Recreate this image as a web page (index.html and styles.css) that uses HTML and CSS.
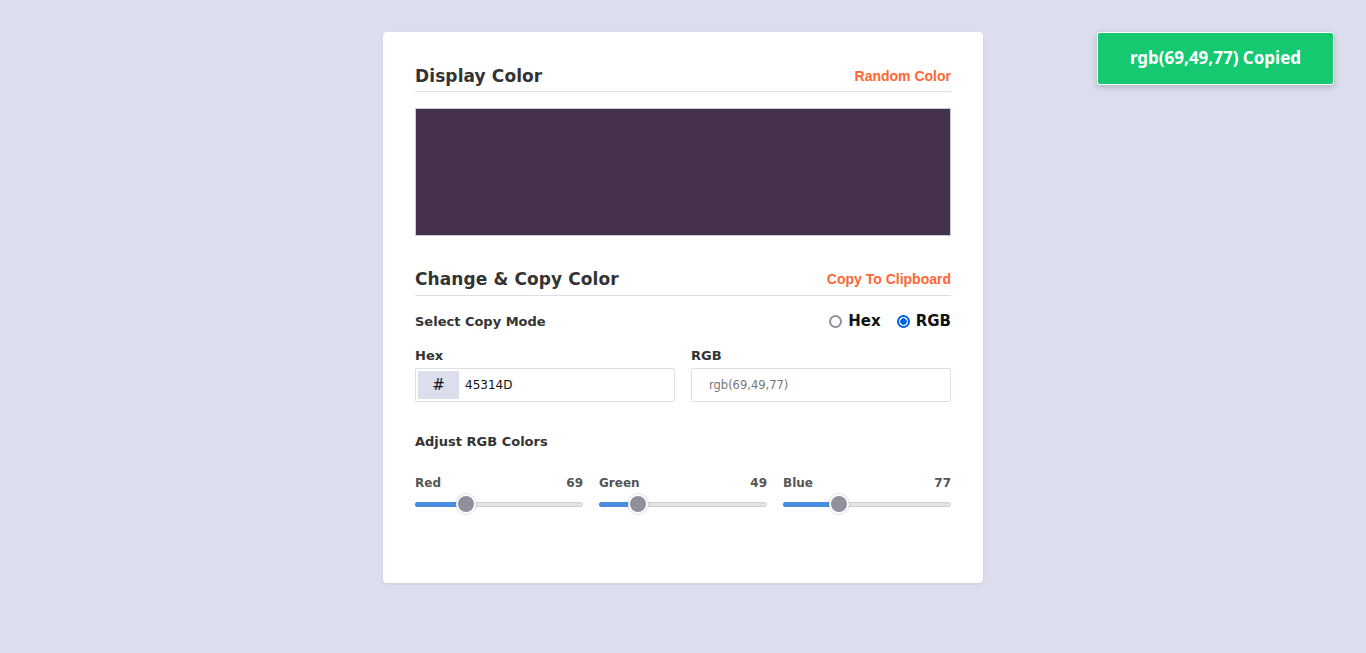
FILE: index.html
```html
<!DOCTYPE html>
<html>
<head>
<meta charset="utf-8">
<link rel="stylesheet" href="styles.css">
</head>
<body>
<div class="page">
  <div class="card">
    <div class="section-head">
      <h2>Display Color</h2>
      <button class="link">Random Color</button>
    </div>
    <div class="display" style="background:#45314D"></div>

    <div class="section-head second">
      <h2>Change &amp; Copy Color</h2>
      <button class="link">Copy To Clipboard</button>
    </div>

    <div class="mode-row">
      <span class="sub">Select Copy Mode</span>
      <div class="radios">
        <label class="radio"><span class="dot"></span>Hex</label>
        <label class="radio"><span class="dot on"></span>RGB</label>
      </div>
    </div>

    <div class="inputs">
      <div class="field">
        <span class="sub">Hex</span>
        <div class="box">
          <span class="hash">#</span>
          <span class="val">45314D</span>
        </div>
      </div>
      <div class="field">
        <span class="sub">RGB</span>
        <div class="box">
          <span class="placeholder">rgb(69,49,77)</span>
        </div>
      </div>
    </div>

    <div class="sub adjust">Adjust RGB Colors</div>

    <div class="sliders">
      <div class="slider">
        <div class="slider-top"><span>Red</span><span>69</span></div>
        <div class="track"><div class="fill" style="width:50px"></div><div class="thumb" style="left:50px"></div></div>
      </div>
      <div class="slider">
        <div class="slider-top"><span>Green</span><span>49</span></div>
        <div class="track"><div class="fill" style="width:38px"></div><div class="thumb" style="left:38px"></div></div>
      </div>
      <div class="slider">
        <div class="slider-top"><span>Blue</span><span>77</span></div>
        <div class="track"><div class="fill" style="width:55px"></div><div class="thumb" style="left:55px"></div></div>
      </div>
    </div>
  </div>
</div>
<div class="toast">rgb(69,49,77) Copied</div>
</body>
</html>
```
FILE: styles.css
```css
* { box-sizing: border-box; }
html, body { margin: 0; padding: 0; }
body {
  background: #dcdeed;
  font-family: "DejaVu Sans", "Open Sans", sans-serif;
  color: #333;
  height: 653px;
  overflow: hidden;
}
.page {
  display: flex;
  justify-content: center;
  padding-top: 32px;
}
.card {
  width: 600px;
  height: 551px;
  background: #fff;
  border-radius: 4px;
  padding: 30px 32px 0 32px;
  box-shadow: 0 1px 3px rgba(0,0,0,0.08);
}
.section-head {
  display: flex;
  justify-content: space-between;
  align-items: center;
  border-bottom: 1px solid #dcdeec;
  height: 30px;
  padding-bottom: 2px;
}
.section-head.second { margin-top: 30px; padding-bottom: 4px; }
.section-head h2 {
  margin: 0;
  font-size: 17px;
  font-weight: bold;
  color: #333;
  letter-spacing: 0.1px;
}
.link {
  border: none;
  background: none;
  padding: 0;
  color: #ff6633;
  font-family: "Liberation Sans", Arial, sans-serif;
  font-weight: bold;
  font-size: 14px;
  cursor: pointer;
}
.display {
  margin-top: 16px;
  height: 128px;
  width: 536px;
  border: 1px solid #ccc;
}
.mode-row {
  display: flex;
  justify-content: space-between;
  align-items: center;
  margin-top: 15px;
  height: 20px;
}
.sub {
  font-size: 13px;
  font-weight: bold;
  color: #333;
}
.radios { display: flex; gap: 16px; }
.radio {
  display: flex;
  align-items: center;
  gap: 6px;
  font-size: 15px;
  font-weight: bold;
  color: #111;
}
.dot {
  width: 13px;
  height: 13px;
  border-radius: 50%;
  border: 2px solid #8f8f9d;
  background: #fff;
}
.dot.on {
  border-color: #0060df;
  background: radial-gradient(circle, #0060df 0 3px, #fff 3.5px);
}
.inputs {
  display: grid;
  grid-template-columns: 1fr 1fr;
  gap: 16px;
  margin-top: 17px;
}
.field { display: flex; flex-direction: column; gap: 5px; }
.box {
  height: 34px;
  border: 1px solid #dcdeec;
  border-radius: 2px;
  display: flex;
  align-items: center;
  padding: 2px;
}
.hash {
  width: 41px;
  height: 100%;
  background: #dcdeec;
  display: flex;
  align-items: center;
  justify-content: center;
  font-size: 15px;
  color: #111;
}
.val {
  padding-left: 6px;
  font-size: 12px;
  color: #111;
}
.placeholder {
  padding-left: 15px;
  font-size: 11.5px;
  color: #777;
}
.adjust { margin-top: 32px; }
.sliders {
  display: grid;
  grid-template-columns: repeat(3, 1fr);
  gap: 16px;
  margin-top: 27px;
}
.slider-top {
  display: flex;
  justify-content: space-between;
  font-size: 12px;
  font-weight: bold;
  color: #555;
}
.track {
  position: relative;
  margin-top: 12px;
  height: 5px;
  border-radius: 3px;
  background: #e3e3e6;
  border: 1px solid #cfcfd6;
}
.fill {
  position: absolute;
  left: -1px; top: -1px;
  height: 5px;
  border-radius: 3px;
  background: #4a8de0;
}
.thumb {
  position: absolute;
  top: -9px;
  width: 20px;
  height: 20px;
  margin-left: -10px;
  border-radius: 50%;
  background: #8f8f9d;
  border: 2px solid #fff;
  box-shadow: 0 0 2px rgba(0,0,0,0.3);
}
.toast {
  position: absolute;
  left: 1097px;
  top: 32px;
  width: 237px;
  height: 53px;
  background: #14c96f;
  color: #fff;
  border: 1px solid #fff;
  border-radius: 3px;
  display: flex;
  align-items: center;
  justify-content: center;
  font-family: "Noto Sans", "DejaVu Sans", sans-serif;
  font-size: 17px;
  font-weight: bold;
  padding-bottom: 2px;
  box-shadow: 0 2px 6px rgba(0,0,0,0.2);
}
```
